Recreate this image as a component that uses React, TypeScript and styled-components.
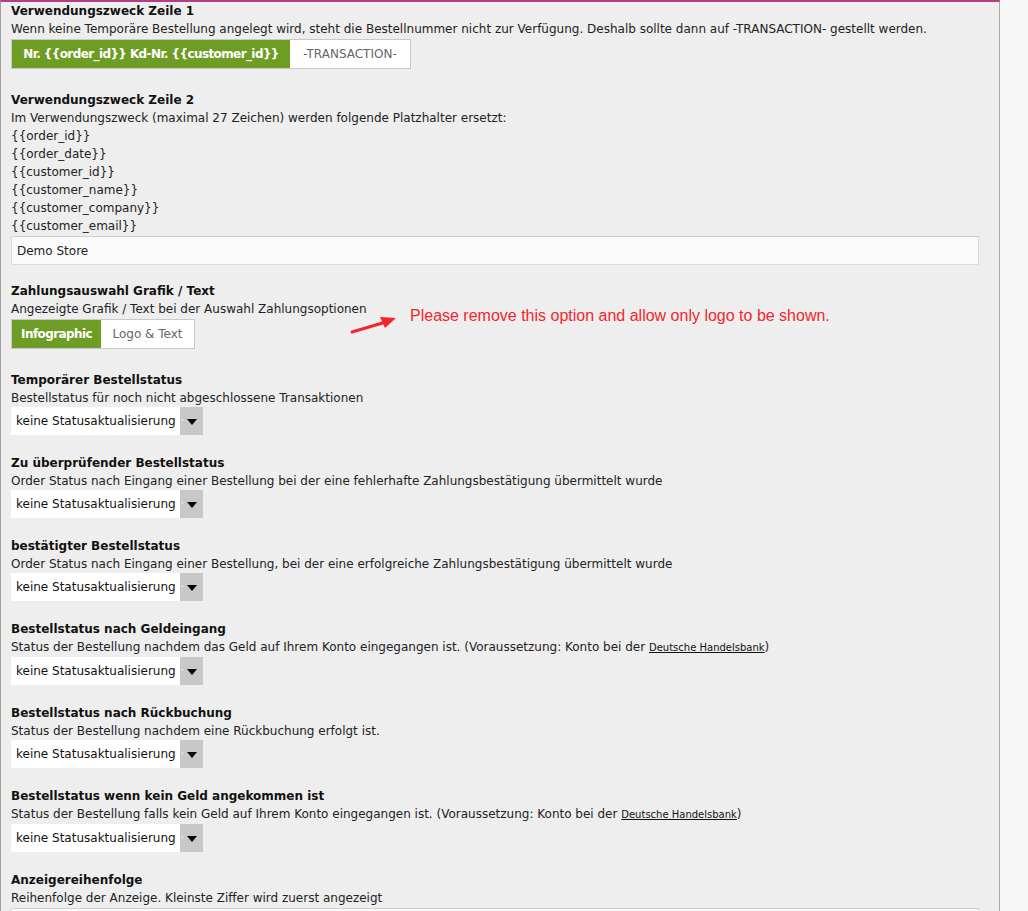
import React from "react";
import styled, { createGlobalStyle } from "styled-components";

const GlobalStyle = createGlobalStyle`
  html, body { margin: 0; padding: 0; background: #f7f7f7; }
  body { font-family: "DejaVu Sans", Verdana, sans-serif; font-size: 12px; color: #111; }
  * { box-sizing: border-box; }
`;

const Page = styled.div`
  display: flex;
  min-height: 911px;
  background: #f7f7f7;
`;

const Main = styled.div`
  width: 1000px;
  flex: none;
  background: #eeeeee;
  border-left: 1px solid #a0a0a0;
  border-top: 2px solid #b23d80;
  border-right: 1px solid #a9a9a9;
  padding: 0 20px 0 10px;
  overflow: hidden;
`;

const Section = styled.section<{ $gap: number }>`
  position: relative;
  display: flex;
  flex-direction: column;
  align-items: flex-start;
  margin-bottom: ${(p) => p.$gap}px;
`;

const Title = styled.div`
  font-weight: bold;
  font-size: 12px;
  line-height: 18px;
  color: #111;
`;

const Desc = styled.div`
  font-size: 12px;
  line-height: 18px;
  color: #222;
  white-space: nowrap;
`;

const Link = styled.a`
  font-size: 10px;
  color: #111;
  text-decoration: underline;
`;

const Toggle = styled.div`
  display: flex;
  margin-top: 1px;
  border: 1px solid #c9c9c9;
  height: 30px;
`;

const ToggleOption = styled.div<{ $active?: boolean; $w: number }>`
  width: ${(p) => p.$w}px;
  display: flex;
  align-items: center;
  justify-content: center;
  background: ${(p) => (p.$active ? "#6e9d25" : "#ffffff")};
  color: ${(p) => (p.$active ? "#ffffff" : "#666666")};
  font-weight: ${(p) => (p.$active ? "bold" : "normal")};
  font-size: 12px;
  letter-spacing: ${(p) => (p.$active ? "-0.6px" : "0")};
  white-space: nowrap;
`;

const TextInput = styled.div`
  align-self: stretch;
  margin-top: 1px;
  height: 29px;
  background: #fafafa;
  border: 1px solid #dcdcdc;
  border-top-color: #cfcfcf;
  padding: 0 5px;
  display: flex;
  align-items: center;
  font-size: 12px;
  color: #222;
`;

const SelectBox = styled.div`
  display: flex;
  height: 28px;
  width: 192px;
  background: #ffffff;
`;

const SelectText = styled.div`
  flex: 1;
  display: flex;
  align-items: center;
  padding-left: 5px;
  font-size: 12px;
  color: #111;
  white-space: nowrap;
`;

const SelectButton = styled.div`
  position: relative;
  width: 23px;
  background: #c8c8c8;
  display: flex;
  align-items: center;
  justify-content: center;
  &::before {
    content: "";
    position: absolute;
    left: 2px;
    top: 12px;
    width: 1px;
    height: 2px;
    background: #f4f4f4;
  }
`;

const Caret = styled.div`
  width: 0;
  height: 0;
  border-left: 5px solid transparent;
  border-right: 5px solid transparent;
  border-top: 6px solid #000;
  margin-top: 1px;
`;

const Annotation = styled.div`
  position: absolute;
  left: 339px;
  top: 20px;
  display: flex;
  align-items: flex-start;
  pointer-events: none;
`;

const Arrow = styled.svg`
  margin-top: 11px;
  flex: none;
`;

const AnnotationText = styled.div`
  font-family: "Liberation Sans", Arial, sans-serif;
  font-size: 16px;
  color: #f2262b;
  white-space: nowrap;
  margin-left: 12px;
  margin-top: 5px;
`;

const Select = () => (
  <SelectBox>
    <SelectText>keine Statusaktualisierung</SelectText>
    <SelectButton>
      <Caret />
    </SelectButton>
  </SelectBox>
);

const placeholders = [
  "{{order_id}}",
  "{{order_date}}",
  "{{customer_id}}",
  "{{customer_name}}",
  "{{customer_company}}",
  "{{customer_email}}",
];

const statusSections: { title: string; desc: React.ReactNode }[] = [
  {
    title: "Temporärer Bestellstatus",
    desc: "Bestellstatus für noch nicht abgeschlossene Transaktionen",
  },
  {
    title: "Zu überprüfender Bestellstatus",
    desc: "Order Status nach Eingang einer Bestellung bei der eine fehlerhafte Zahlungsbestätigung übermittelt wurde",
  },
  {
    title: "bestätigter Bestellstatus",
    desc: "Order Status nach Eingang einer Bestellung, bei der eine erfolgreiche Zahlungsbestätigung übermittelt wurde",
  },
  {
    title: "Bestellstatus nach Geldeingang",
    desc: (
      <>
        Status der Bestellung nachdem das Geld auf Ihrem Konto eingegangen ist. (Voraussetzung: Konto bei der{" "}
        <Link href="#">Deutsche Handelsbank</Link>)
      </>
    ),
  },
  {
    title: "Bestellstatus nach Rückbuchung",
    desc: "Status der Bestellung nachdem eine Rückbuchung erfolgt ist.",
  },
  {
    title: "Bestellstatus wenn kein Geld angekommen ist",
    desc: (
      <>
        Status der Bestellung falls kein Geld auf Ihrem Konto eingegangen ist. (Voraussetzung: Konto bei der{" "}
        <Link href="#">Deutsche Handelsbank</Link>)
      </>
    ),
  },
];

export default function App() {
  return (
    <>
      <GlobalStyle />
      <Page>
        <Main>
          <Section $gap={22}>
            <Title>Verwendungszweck Zeile 1</Title>
            <Desc>
              Wenn keine Temporäre Bestellung angelegt wird, steht die Bestellnummer nicht zur Verfügung. Deshalb sollte dann auf -TRANSACTION- gestellt werden.
            </Desc>
            <Toggle>
              <ToggleOption $active $w={278}>
                Nr. {"{{order_id}}"} Kd-Nr. {"{{customer_id}}"}
              </ToggleOption>
              <ToggleOption $w={120}>-TRANSACTION-</ToggleOption>
            </Toggle>
          </Section>

          <Section $gap={17}>
            <Title>Verwendungszweck Zeile 2</Title>
            <Desc>Im Verwendungszweck (maximal 27 Zeichen) werden folgende Platzhalter ersetzt:</Desc>
            {placeholders.map((p) => (
              <Desc key={p}>{p}</Desc>
            ))}
            <TextInput>Demo Store</TextInput>
          </Section>

          <Section $gap={22}>
            <Title>Zahlungsauswahl Grafik / Text</Title>
            <Desc>Angezeigte Grafik / Text bei der Auswahl Zahlungsoptionen</Desc>
            <Toggle>
              <ToggleOption $active $w={89}>
                Infographic
              </ToggleOption>
              <ToggleOption $w={93}>Logo &amp; Text</ToggleOption>
            </Toggle>
            <Annotation>
              <Arrow width="48" height="22" viewBox="0 0 48 22">
                <line x1="2" y1="19" x2="36" y2="9" stroke="#f2262b" strokeWidth="3" strokeLinecap="round" />
                <polygon points="46,5 30,4 35,15" fill="#f2262b" />
              </Arrow>
              <AnnotationText>Please remove this option and allow only logo to be shown.</AnnotationText>
            </Annotation>
          </Section>

          {statusSections.map((s) => (
            <Section $gap={19} key={s.title}>
              <Title>{s.title}</Title>
              <Desc>{s.desc}</Desc>
              <Select />
            </Section>
          ))}

          <Section $gap={0}>
            <Title>Anzeigereihenfolge</Title>
            <Desc>Reihenfolge der Anzeige. Kleinste Ziffer wird zuerst angezeigt</Desc>
            <TextInput />
          </Section>
        </Main>
      </Page>
    </>
  );
}
